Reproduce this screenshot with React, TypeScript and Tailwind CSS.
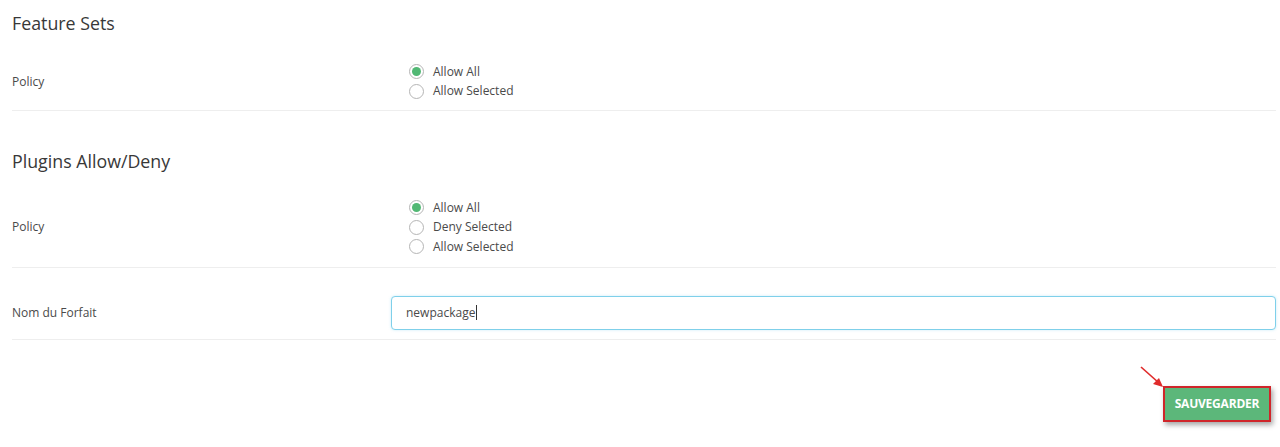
import type { FC } from 'react';

type RadioProps = { label: string; checked?: boolean };

const Radio: FC<RadioProps> = ({ label, checked }) => {
  return (
    <div className="flex h-[19.5px] items-center">
      <span className="flex h-[15px] w-[15px] items-center justify-center rounded-full border border-[#b5b5b5] bg-white">
        {checked && <span className="h-[9px] w-[9px] rounded-full bg-[#52b874]" />}
      </span>
      <span className="ml-[9px] text-[12px] text-[#4a4a4a]">{label}</span>
    </div>
  );
};

type RowProps = { label: string; children: React.ReactNode; className?: string };

const Row: FC<RowProps> = ({ label, children, className }) => {
  return (
    <div className={`flex items-center border-b border-[#eeeeee] ${className ?? ''}`}>
      <div className="w-[379px] shrink-0 text-[12px] text-[#4a4a4a]">{label}</div>
      <div className="flex-1">{children}</div>
    </div>
  );
};

const App: FC = () => {
  return (
    <div className="relative h-[447px] w-[1280px] overflow-hidden bg-white pl-3 pr-1 pt-[11px] font-['Open_Sans',sans-serif]">
      <h2 className="h-6 text-[17.8px] font-medium leading-6 text-[#383838]">Feature Sets</h2>
      <Row label="Policy" className="mt-[27px] pb-[9px]">
        <div className="pl-[18px]">
          <Radio label="Allow All" checked />
          <Radio label="Allow Selected" />
        </div>
      </Row>

      <h2 className="mt-[38px] h-6 text-[17.8px] font-medium leading-6 text-[#383838]">Plugins Allow/Deny</h2>
      <Row label="Policy" className="mt-[25px] pb-[10px]">
        <div className="pl-[18px]">
          <Radio label="Allow All" checked />
          <Radio label="Deny Selected" />
          <Radio label="Allow Selected" />
        </div>
      </Row>

      <Row label="Nom du Forfait" className="pb-[9px] pt-[28px]">
        <div className="flex h-[34px] items-center rounded-[4px] border border-[#7fd0ea] bg-white pl-[14px] text-[12px] text-[#4a4a4a] shadow-[0_0_3px_rgba(102,200,235,0.35)]">
          newpackage
          <span className="ml-px h-[15px] w-px bg-[#333]" />
        </div>
      </Row>

      <div className="mt-[46px] flex justify-end pr-[5px]">
        <button className="flex h-[36px] w-[108px] items-center justify-center border-2 border-[#d0252a] bg-[#5cb77a] text-[12px] font-bold tracking-[-0.2px] text-white shadow-[2px_3px_5px_rgba(0,0,0,0.35)]">
          SAUVEGARDER
        </button>
      </div>

      <svg className="absolute left-[1138px] top-[364px]" width="30" height="26" viewBox="0 0 30 26">
        <line x1="3" y1="3" x2="21" y2="19" stroke="#e02b2b" strokeWidth="1.6" />
        <polygon points="25,23 15,20 21,14" fill="#e02b2b" />
      </svg>
    </div>
  );
};

export default App;
